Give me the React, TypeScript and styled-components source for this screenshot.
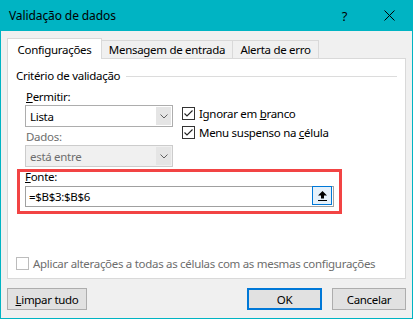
import styled, { createGlobalStyle } from "styled-components";

const TEAL = "#00b4c3";
const BLUE = "#0078d7";

const GlobalStyle = createGlobalStyle`
  html, body {
    margin: 0;
    padding: 0;
    background: #ffffff;
  }
  body {
    font-family: "Noto Sans", "Liberation Sans", sans-serif;
    font-size: 11.5px;
    letter-spacing: -0.3px;
    color: #000;
  }
  * {
    box-sizing: border-box;
  }
`;

const Check = ({ disabled, checked }: { disabled?: boolean; checked?: boolean }) => (
  <CheckBox $disabled={disabled}>
    {checked && (
      <svg width="11" height="11" viewBox="0 0 11 11">
        <path d="M1.5 5.5 L4 8 L9.5 2.5" fill="none" stroke="#222" strokeWidth="1.1" />
      </svg>
    )}
  </CheckBox>
);

const Chevron = () => (
  <svg width="8" height="5" viewBox="0 0 8 5">
    <path d="M0.5 0.5 L4 4 L7.5 0.5" fill="none" stroke="#606060" strokeWidth="1" />
  </svg>
);

const App = () => {
  return (
    <>
      <GlobalStyle />
      <Window>
        <TitleBar>
          <Title>Validação de dados</Title>
          <TitleButton>?</TitleButton>
          <TitleButton>
            <svg width="11" height="11" viewBox="0 0 11 11">
              <path d="M0.5 0.5 L10.5 10.5 M10.5 0.5 L0.5 10.5" stroke="#000" strokeWidth="1" />
            </svg>
          </TitleButton>
        </TitleBar>

        <Body>
          <TabRow>
            <Tab $active $width={95}>Configurações</Tab>
            <Tab $width={132}>Mensagem de entrada</Tab>
            <Tab $width={87}>Alerta de erro</Tab>
          </TabRow>

          <Panel>
            <GroupHeader>
              <span>Critério de validação</span>
              <GroupLine />
            </GroupHeader>

            <Criteria>
              <LeftColumn>
                <Label>
                  <u>P</u>ermitir:
                </Label>
                <Combo>
                  <ComboText>Lista</ComboText>
                  <ComboButton>
                    <Chevron />
                  </ComboButton>
                </Combo>
                <Label $disabled>Dados:</Label>
                <Combo $disabled>
                  <ComboText>está entre</ComboText>
                  <ComboButton>
                    <Chevron />
                  </ComboButton>
                </Combo>
              </LeftColumn>

              <RightColumn>
                <CheckRow>
                  <Check checked />
                  <span>
                    Ignorar em <u>b</u>ranco
                  </span>
                </CheckRow>
                <CheckRow>
                  <Check checked />
                  <span>
                    Menu suspenso na <u>c</u>élula
                  </span>
                </CheckRow>
              </RightColumn>
            </Criteria>

            <Highlight>
              <SourceLabel>
                <u>F</u>onte:
              </SourceLabel>
              <SourceInput>
                <InputText>=$B$3:$B$6</InputText>
                <PickButton>
                  <svg width="9" height="10" viewBox="0 0 9 10">
                    <path d="M4.5 0 L9 4.5 L6 4.5 L6 7.5 L3 7.5 L3 4.5 L0 4.5 Z" fill="#000" />
                    <rect x="0" y="9" width="9" height="1" fill="#000" />
                  </svg>
                </PickButton>
              </SourceInput>
            </Highlight>

            <Spacer />

            <ApplyRow>
              <Check disabled />
              <span>Aplicar alterações a todas as células com as mesmas configurações</span>
            </ApplyRow>
          </Panel>

          <ButtonRow>
            <Button $width={80}>
              <u>L</u>impar tudo
            </Button>
            <Spacer />
            <Button $width={75} $primary>
              OK
            </Button>
            <Button $width={74}>Cancelar</Button>
          </ButtonRow>
        </Body>
      </Window>
    </>
  );
};

export default App;

const Window = styled.div`
  width: 413px;
  height: 319px;
  display: flex;
  flex-direction: column;
  background: #f0f0f0;
  border: 1px solid ${TEAL};
  border-top: none;
`;

const TitleBar = styled.div`
  height: 31px;
  display: flex;
  align-items: center;
  padding-left: 8px;
  background: ${TEAL};
`;

const Title = styled.div`
  flex: 1;
  font-size: 12px;
  letter-spacing: -0.1px;
`;

const TitleButton = styled.div`
  width: 45px;
  height: 31px;
  display: flex;
  align-items: center;
  justify-content: center;
  font-size: 13px;
`;

const Body = styled.div`
  flex: 1;
  display: flex;
  flex-direction: column;
  padding: 7px 6px 8px 6px;
`;

const TabRow = styled.div`
  display: flex;
  align-items: flex-end;
  height: 20px;
  position: relative;
  z-index: 1;
`;

const Tab = styled.div<{ $active?: boolean; $width: number }>`
  width: ${(p) => p.$width}px;
  height: ${(p) => (p.$active ? 21 : 18)}px;
  margin-bottom: ${(p) => (p.$active ? -1 : 0)}px;
  margin-right: -1px;
  display: flex;
  align-items: center;
  justify-content: center;
  background: ${(p) => (p.$active ? "#ffffff" : "#f0f0f0")};
  border: 1px solid #d9d9d9;
  border-bottom: none;
  white-space: nowrap;
`;

const Panel = styled.div`
  flex: 1;
  display: flex;
  flex-direction: column;
  background: #ffffff;
  border: 1px solid #d9d9d9;
  padding: 9px 8px 7px 8px;
`;

const GroupHeader = styled.div`
  display: flex;
  align-items: center;
  gap: 6px;
  line-height: 16px;
`;

const GroupLine = styled.div`
  flex: 1;
  height: 1px;
  background: #dcdcdc;
`;

const Criteria = styled.div`
  display: flex;
  margin-top: 5px;
  padding-left: 9px;
`;

const LeftColumn = styled.div`
  width: 148px;
  flex-shrink: 0;
  display: flex;
  flex-direction: column;
`;

const Label = styled.div<{ $disabled?: boolean }>`
  line-height: 16px;
  padding-left: 1px;
  color: ${(p) => (p.$disabled ? "#6d6d6d" : "#000")};
`;

const Combo = styled.div<{ $disabled?: boolean }>`
  height: 22px;
  display: flex;
  align-items: center;
  background: ${(p) => (p.$disabled ? "#f0f0f0" : "#ffffff")};
  border: 1px solid ${(p) => (p.$disabled ? "#cccccc" : "#adadad")};
  color: ${(p) => (p.$disabled ? "#6d6d6d" : "#000")};
  padding: 1px;
  margin-bottom: 2px;
`;

const ComboText = styled.div`
  flex: 1;
  padding-left: 3px;
`;

const ComboButton = styled.div`
  width: 15px;
  height: 100%;
  display: flex;
  align-items: center;
  justify-content: center;
  background: #e5e5e5;
`;

const RightColumn = styled.div`
  display: flex;
  flex-direction: column;
  gap: 3px;
  padding-top: 16px;
  margin-left: 9px;
`;

const CheckRow = styled.div`
  display: flex;
  align-items: center;
  gap: 4px;
  height: 16px;
  white-space: nowrap;
`;

const CheckBox = styled.div<{ $disabled?: boolean }>`
  width: 13px;
  height: 13px;
  flex-shrink: 0;
  display: flex;
  align-items: center;
  justify-content: center;
  background: #ffffff;
  border: 1px solid ${(p) => (p.$disabled ? "#bcbcbc" : "#333333")};
`;

const Highlight = styled.div`
  align-self: flex-start;
  display: flex;
  flex-direction: column;
  margin-left: 1px;
  padding: 0 5px 4px 5px;
  border: 3px solid #f24444;
`;

const SourceLabel = styled.div`
  line-height: 14px;
  margin-top: -2px;
`;

const SourceInput = styled.div`
  width: 309px;
  height: 21px;
  margin-top: 2px;
  display: flex;
  align-items: flex-start;
  border: 1px solid #a0a0a0;
  background: #ffffff;
`;

const InputText = styled.div`
  flex: 1;
  line-height: 19px;
  padding-left: 3px;
`;

const PickButton = styled.div`
  width: 20px;
  height: 19px;
  margin: -1px 1px 0 0;
  display: flex;
  align-items: center;
  justify-content: center;
  background: #e5f1fb;
  border: 1px solid ${BLUE};
`;

const Spacer = styled.div`
  flex: 1;
`;

const ApplyRow = styled.div`
  display: flex;
  align-items: center;
  gap: 4px;
  height: 16px;
  color: #6d6d6d;
  white-space: nowrap;
`;

const ButtonRow = styled.div`
  display: flex;
  gap: 10px;
  margin-top: 9px;
`;

const Button = styled.div<{ $width: number; $primary?: boolean }>`
  width: ${(p) => p.$width}px;
  height: 22px;
  display: flex;
  align-items: center;
  justify-content: center;
  background: #e1e1e1;
  border: ${(p) => (p.$primary ? `2px solid ${BLUE}` : "1px solid #adadad")};
`;
